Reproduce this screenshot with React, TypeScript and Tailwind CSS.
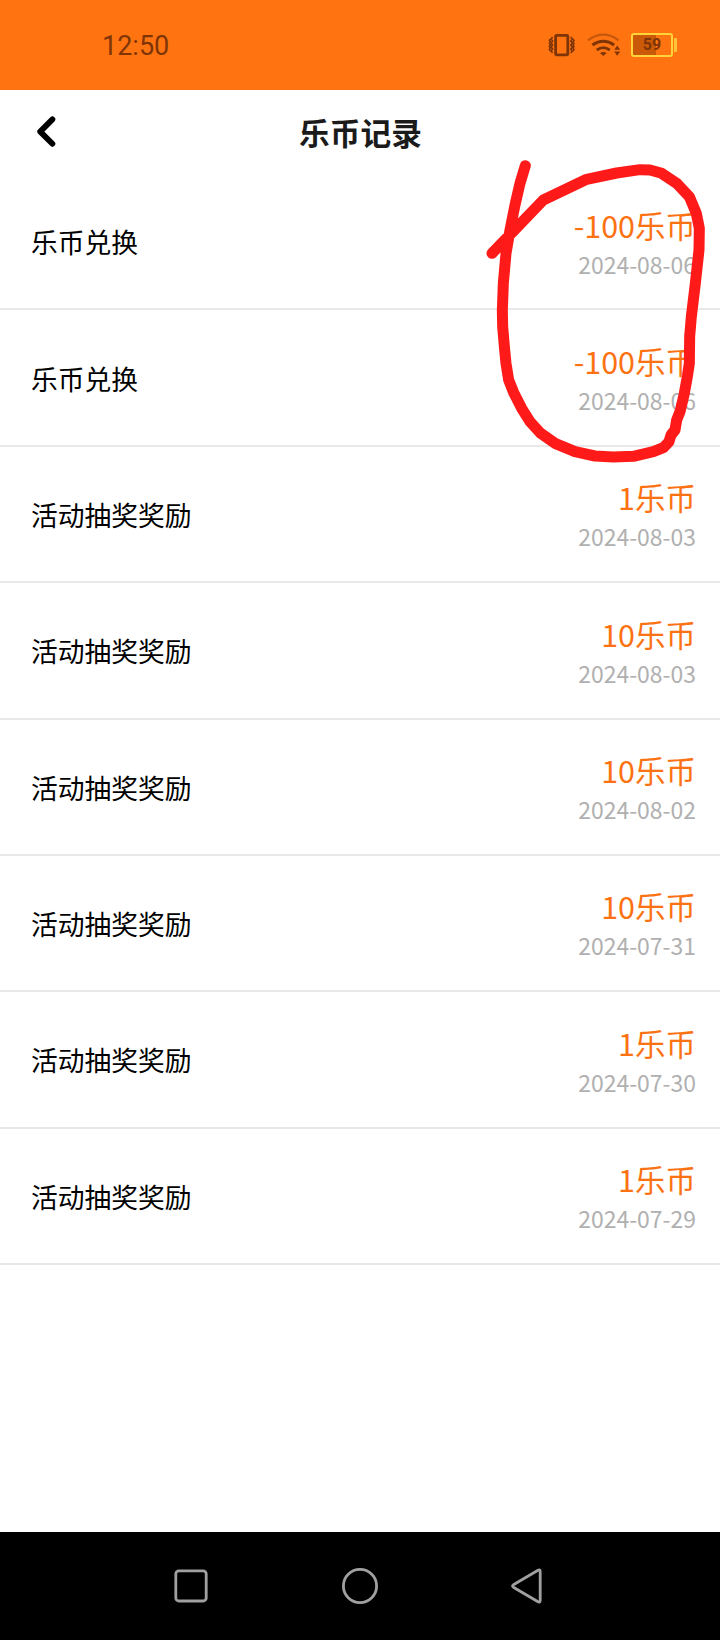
type CoinRecord = {
  title: string
  amount: string
  date: string
}

const records: CoinRecord[] = [
  { title: "乐币兑换", amount: "-100乐币", date: "2024-08-06" },
  { title: "乐币兑换", amount: "-100乐币", date: "2024-08-06" },
  { title: "活动抽奖奖励", amount: "1乐币", date: "2024-08-03" },
  { title: "活动抽奖奖励", amount: "10乐币", date: "2024-08-03" },
  { title: "活动抽奖奖励", amount: "10乐币", date: "2024-08-02" },
  { title: "活动抽奖奖励", amount: "10乐币", date: "2024-07-31" },
  { title: "活动抽奖奖励", amount: "1乐币", date: "2024-07-30" },
  { title: "活动抽奖奖励", amount: "1乐币", date: "2024-07-29" },
]

function StatusBar() {
  return (
    <div className="flex h-[90px] shrink-0 items-center justify-between bg-[#ff7411] pl-[102px] pr-[43px]">
      <span className="pt-[2px] font-['Roboto',sans-serif] text-[27px] leading-none text-[#7e3407]">12:50</span>
      <div className="flex items-center text-[#7e3407]">
        {/* Vibrate */}
        <svg className="h-[24px] w-[28px]" viewBox="0 0 28 24" fill="none" stroke="currentColor">
          <rect x="7.6" y="2.4" width="12.2" height="19.4" rx="1" strokeWidth="2.8" />
          <path d="M4.6 4l-1.5 2 1.5 2-1.5 2 1.5 2-1.5 2 1.5 2-1.5 2 1.5 2M2.4 6l-1 1.5 1 1.5-1 1.5 1 1.5-1 1.5 1 1.5-1 1.5 1 1.5" strokeWidth="1.6" />
          <path d="M22.8 4l1.5 2-1.5 2 1.5 2-1.5 2 1.5 2-1.5 2 1.5 2-1.5 2M25 6l1 1.5-1 1.5 1 1.5-1 1.5 1 1.5-1 1.5 1 1.5-1 1.5" strokeWidth="1.6" />
        </svg>
        {/* Wifi */}
        <svg className="ml-[11px] h-[24px] w-[34px]" viewBox="0 0 34 24" fill="none" stroke="currentColor">
          <path d="M1 7.4Q16.3 -4 31.6 7.4" strokeWidth="2.2" opacity="0.45" />
          <path d="M5.4 12Q16.3 4.6 27.2 12" strokeWidth="2.8" />
          <path d="M9.8 17Q16.3 12.2 22.8 17" strokeWidth="2.8" />
          <path d="M13 19.9Q16.3 18.3 19.6 19.9L16.3 23z" fill="currentColor" stroke="none" />
          <path d="M27.2 16.8l3-4.2 3 4.2zM27.2 18.6l3 4.2 3-4.2z" fill="currentColor" stroke="none" />
        </svg>
        {/* Battery */}
        <div className="ml-[10px] flex items-center">
          <div className="flex h-[24px] w-[42px] items-center justify-center rounded-[3px] border-2 border-[#ffd43b] bg-linear-to-r from-[#cb5a08] from-60% to-[#ff7411] to-60%">
            <span className="font-['Roboto',sans-serif] text-[16px] font-bold leading-none text-[#7e3407]">59</span>
          </div>
          <div className="ml-[1px] h-[14px] w-[3px] rounded-r-[1px] bg-[#ffc536]" />
        </div>
      </div>
    </div>
  )
}

function Header() {
  return (
    <header className="grid h-[84.1px] shrink-0 grid-cols-[81px_1fr_80px] items-center">
      <svg className="ml-[34px] h-[34px] w-[24px]" viewBox="0 0 24 34" fill="none" stroke="#000" strokeWidth="5.8">
        <path d="M18.4 4.4L6.2 16.6l12.200 12.200" strokeLinecap="round" strokeLinejoin="round" />
      </svg>
      <h1 className="text-center text-[30.7px] font-bold leading-none text-[#1b1b1b]">乐币记录</h1>
    </header>
  )
}

function RecordRow({ record }: { record: CoinRecord }) {
  return (
    <li className="flex h-[136.36px] items-center justify-between border-b-2 border-[#e8e8e8] pl-[31px] pr-[24px]">
      <span className="pt-[2px] text-[26.75px] leading-[40px] text-black">{record.title}</span>
      <div className="flex flex-col items-end pt-[0.5px]">
        <span className="text-[30.5px] leading-[44px] text-[#fc7212]">{record.amount}</span>
        <span className="text-[22.95px] leading-[34px] text-[#b0b0b0]">{record.date}</span>
      </div>
    </li>
  )
}

function NavigationBar() {
  return (
    <nav className="flex h-[108px] shrink-0 items-center justify-between bg-black pl-[173px] pr-[175px]">
      <svg className="h-[36px] w-[36px]" viewBox="0 0 36 36" fill="none" stroke="#a0a0a0" strokeWidth="2.8">
        <rect x="2.8" y="2.8" width="30.4" height="30.2" rx="3" />
      </svg>
      <svg className="h-[38px] w-[38px]" viewBox="0 0 38 38" fill="none" stroke="#a0a0a0" strokeWidth="2.8">
        <circle cx="19" cy="19" r="16.6" />
      </svg>
      <svg className="h-[36px] w-[34px]" viewBox="0 0 34 36" fill="none" stroke="#a0a0a0" strokeWidth="2.8">
        <path d="M2.4 16.8L27 2.3Q29.2 1.2 29.2 3.6V32.4Q29.2 34.8 27 33.7L2.4 19.2Q0.7 18 2.4 16.8z" />
      </svg>
    </nav>
  )
}

// Hand-drawn loop around the two redemptions
function MarkerLoop() {
  return (
    <svg
      className="pointer-events-none absolute left-[480px] top-[150px] h-[320px] w-[240px]"
      viewBox="0 0 720 960"
      fill="none"
      stroke="#ff1a1a"
      strokeWidth="33"
      strokeLinecap="round"
      strokeLinejoin="round"
    >
      <path d="M136 47L120 100L105 165L90 240L78 310L70 400L67 480L68 530L74 600L78 640L86 690L102 730L125 775L150 815L180 848L225 880L285 905L345 918L400 921L460 919L520 905L550 893L567 875L573 855L585 840L590 810L600 785L612 735L622 680L628 640L629 560L634 500L646 400L657 300L658 235L649 190L628 140L590 100L545 70L510 60L480 59L410 69L320 88L190 150L36 310" />
    </svg>
  )
}

export default function App() {
  return (
    <div className="relative flex h-[1640px] w-[720px] flex-col overflow-hidden bg-white font-['Noto_Sans_CJK_SC',sans-serif]">
      <StatusBar />
      <Header />
      <main className="flex-1">
        <ul>
          {records.map((record, i) => (
            <RecordRow key={i} record={record} />
          ))}
        </ul>
      </main>
      <NavigationBar />
      <MarkerLoop />
    </div>
  )
}
